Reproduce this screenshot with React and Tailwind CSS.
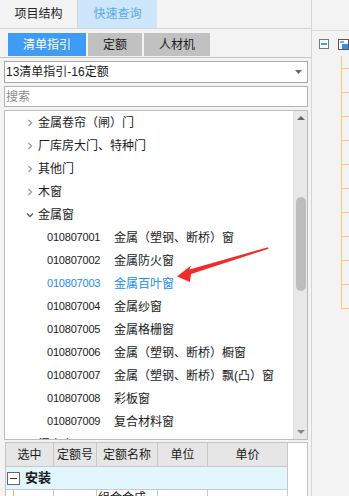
import React from "react";

const FONT = { fontFamily: '"Liberation Sans", "Noto Sans CJK SC", sans-serif' };

function Chevron({ down }) {
  return (
    <svg width="8" height="8" viewBox="0 0 8 8" className="shrink-0">
      {down ? (
        <path d="M1 2.5 L4 5.5 L7 2.5" fill="none" stroke="#555" strokeWidth="1.3" />
      ) : (
        <path d="M2.5 1 L5.5 4 L2.5 7" fill="none" stroke="#9a9a9a" strokeWidth="1.3" />
      )}
    </svg>
  );
}

const groups = [
  { name: "金属卷帘（闸）门" },
  { name: "厂库房大门、特种门" },
  { name: "其他门" },
  { name: "木窗" },
  { name: "金属窗", open: true },
];

const items = [
  ["010807001", "金属（塑钢、断桥）窗"],
  ["010807002", "金属防火窗"],
  ["010807003", "金属百叶窗", true],
  ["010807004", "金属纱窗"],
  ["010807005", "金属格栅窗"],
  ["010807006", "金属（塑钢、断桥）橱窗"],
  ["010807007", "金属（塑钢、断桥）飘(凸）窗"],
  ["010807008", "彩板窗"],
  ["010807009", "复合材料窗"],
];

const ticks = [68, 92, 116, 140, 164, 188, 212, 236, 260, 284, 308];

export default function App() {
  return (
    <div className="relative w-[349px] h-[496px] overflow-hidden bg-[#f3f3f3] flex text-[12px] text-[#1a1a1a]" style={FONT}>
      {/* Left panel */}
      <div className="w-[314px] flex flex-col border-r border-[#d6d6d6]">
        {/* top tabs */}
        <div className="h-[29px] flex border-b border-[#d4d4d4] shrink-0">
          <div className="w-[78px] flex items-center justify-center border-r border-[#d4d4d4] text-[12px] text-[#222]">项目结构</div>
          <div className="w-[79px] flex items-center justify-center bg-[#cde6fa] text-[12px] text-[#5aa8ea]">快速查询</div>
        </div>
        {/* sub tabs */}
        <div className="h-[29px] flex items-end gap-[2px] pl-[8px] border-b border-[#c4c4c4] shrink-0">
          <div className="w-[78px] h-[23px] mb-[1px] flex items-center justify-center bg-[#3f9cf5] text-white text-[12px]">清单指引</div>
          <div className="w-[54px] h-[23px] mb-[1px] flex items-center justify-center bg-[#c1c1c1] text-[12px]">定额</div>
          <div className="w-[66px] h-[23px] mb-[1px] flex items-center justify-center bg-[#c1c1c1] text-[12px]">人材机</div>
        </div>
        <div className="flex flex-col pl-[4px] pr-[3px] pt-[3px] flex-1 min-h-0">
          {/* dropdown */}
          <div className="h-[22px] bg-white border border-[#a9a9a9] flex items-center justify-between pl-[1px] pr-[5px] shrink-0">
            <span className="text-[12px]">13清单指引-16定额</span>
            <svg width="7" height="4" viewBox="0 0 7 4"><path d="M0 0 H7 L3.5 4 Z" fill="#666" /></svg>
          </div>
          {/* search */}
          <div className="h-[21px] mt-[3px] bg-white border border-[#b4b4b4] flex items-center pl-[1px] shrink-0">
            <span className="text-[12px] text-[#8a8a8a]">搜索</span>
          </div>
          {/* tree */}
          <div className="h-[330px] mt-[3px] bg-white border border-[#bcbcbc] flex shrink-0 overflow-hidden">
            <div className="flex-1 flex flex-col overflow-hidden">
              {groups.map((g) => (
                <div key={g.name} className="h-[23px] shrink-0 flex items-center pl-[21px] gap-[4px]">
                  <Chevron down={g.open} />
                  <span className="text-[12px]">{g.name}</span>
                </div>
              ))}
              {items.map(([code, name, active]) => (
                <div key={code} className={`h-[23px] shrink-0 flex items-center ${active ? "text-[#1a8cf0]" : ""}`}>
                  <span className="w-[42px]" />
                  <span className="w-[67px] text-[11px] tracking-[-0.2px]">{code}</span>
                  <span className="text-[12px] whitespace-nowrap">{name}</span>
                </div>
              ))}
              <div className="h-[23px] shrink-0 flex items-center pl-[21px] gap-[4px]">
                <Chevron />
                <span className="text-[12px]">门窗套</span>
              </div>
            </div>
            {/* scrollbar */}
            <div className="w-[14px] bg-[#e8e8e8] border-l border-[#e0e0e0] flex flex-col items-center shrink-0">
              <svg width="8" height="4" viewBox="0 0 8 4" className="mt-[5px]"><path d="M0 4 H8 L4 0 Z" fill="#666" /></svg>
              <div className="w-[10px] h-[94px] mt-[77px] rounded-[5px] bg-[#bdbdbd]" />
              <div className="flex-1" />
              <svg width="8" height="4" viewBox="0 0 8 4" className="mb-[5px]"><path d="M0 0 H8 L4 4 Z" fill="#888" /></svg>
            </div>
          </div>
          {/* table */}
          <div className="mt-[2px] flex-1 bg-white border-l border-r border-t border-[#c4c4c4] flex flex-col ml-[1px]">
            <div className="flex h-[24px] bg-[#e6e6e6] border-b border-[#c8c8c8] shrink-0 mr-[19px]">
              <div className="w-[48px] border-r border-[#c8c8c8] flex items-center justify-center">选中</div>
              <div className="w-[43px] border-r border-[#c8c8c8] flex items-center justify-center">定额号</div>
              <div className="w-[61px] border-r border-[#c8c8c8] flex items-center justify-center">定额名称</div>
              <div className="w-[50px] border-r border-[#c8c8c8] flex items-center justify-center">单位</div>
              <div className="flex-1 border-r border-[#c8c8c8] flex items-center justify-center">单价</div>
            </div>
            <div className="flex items-center h-[23px] bg-[#e1f6fd] border-b border-[#c8c8c8] border-r mr-[19px] shrink-0 pl-[1px] gap-[5px]">
              <div className="w-[13px] h-[13px] border border-[#666] bg-white flex items-center justify-center">
                <div className="w-[7px] h-[1px] bg-[#333]" />
              </div>
              <span className="font-bold text-[13px]">安装</span>
            </div>
            <div className="flex h-[20px] mr-[19px] border-r border-[#c8c8c8]">
              <div className="w-[48px] border-r border-[#c8c8c8] relative">
                <div className="absolute left-[7px] top-0 bottom-0 w-[1px] bg-[#f5b25c]" />
              </div>
              <div className="w-[43px] border-r border-[#c8c8c8]" />
              <div className="w-[61px] border-r border-[#c8c8c8] pl-[1px] text-[12px] leading-[14px] pt-[1px]">组合合成</div>
              <div className="w-[50px] border-r border-[#c8c8c8]" />
              <div className="flex-1" />
            </div>
          </div>
        </div>
      </div>

      {/* Right panel */}
      <div className="flex-1 flex flex-col">
        <div className="h-[31px] border-b border-[#dedede] shrink-0" />
        <div className="flex items-start pl-[7px] pt-[8px] gap-[9px] shrink-0">
          <div className="w-[10px] h-[10px] border border-[#7a7a7a] bg-white flex items-center justify-center">
            <div className="w-[6px] h-[2px] bg-[#3aa0e8]" />
          </div>
          <div className="w-[11px] h-[11px] border border-[#555] bg-white relative overflow-hidden">
            <div className="absolute left-[1px] top-[1px] w-[4px] h-[2px] bg-[#6ab4f0]" />
            <div className="absolute right-0 bottom-0 w-[6px] h-[5px] bg-[#2f8ef0]" />
          </div>
        </div>
        <div className="relative flex-1">
          <div className="absolute left-[29px] top-[6px] h-[252px] w-[1px] bg-[#ffc97a]" />
          {ticks.map((t) => (
            <div key={t} className="absolute left-[29px] w-[8px] h-[1px] bg-[#ffc97a]" style={{ top: t - 50 }} />
          ))}
        </div>
      </div>

      {/* red annotation arrow */}
      <svg className="absolute left-0 top-0 pointer-events-none" width="349" height="496" viewBox="0 0 349 496">
        <polygon points="177,276.5 191,265.5 189.5,269.5 268,247.3 268.5,248.7 191,274 190,282" fill="#f22a2a" />
      </svg>
    </div>
  );
}
